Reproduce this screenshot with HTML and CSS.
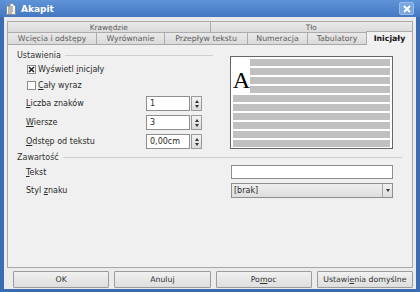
FILE: index.html
```html
<!DOCTYPE html>
<html lang="pl">
<head>
    <meta charset="UTF-8">
    <title>Akapit</title>
    <link rel="stylesheet" href="styles.css">
</head>
<body>
    <div class="window">
        <div class="titlebar">
            <svg class="app-icon" width="11" height="12" viewBox="0 0 11 12">
                <path d="M1.5 0.5h6l3 3v8h-9z" fill="#f4f4f4" stroke="#8a8a8a"/>
                <path d="M3 4h5M3 6h5M3 8h5M3 10h4" stroke="#7a7a7a"/>
                <rect x="1.5" y="0.5" width="4" height="3" fill="#5c8fd0"/>
            </svg>
            <span class="title">Akapit</span>
            <span class="close">
                <svg width="8" height="8" viewBox="0 0 8 8">
                    <path d="M1 1l6 6M7 1l-6 6" stroke="#fff" stroke-width="1.8"/>
                </svg>
            </span>
        </div>

        <div class="client">
            <div class="tabs">
                <div class="tab-row back">
                    <div class="tab wide">Krawędzie</div>
                    <div class="tab wide">Tło</div>
                </div>
                <div class="tab-row front">
                    <div class="tab t1">Wcięcia i odstępy</div>
                    <div class="tab t2">Wyrównanie</div>
                    <div class="tab t3">Przepływ tekstu</div>
                    <div class="tab t4">Numeracja</div>
                    <div class="tab t5">Tabulatory</div>
                    <div class="tab t6 active">Inicjały</div>
                </div>
            </div>

            <div class="panel">
                <div class="top">
                    <div class="settings">
                        <div class="group-title"><span>Ustawienia</span><span class="rule"></span></div>
                        <div class="check-row first">
                            <span class="checkbox checked">
                                <svg width="7" height="7" viewBox="0 0 7 7"><path d="M1 1l5 5M6 1l-5 5" stroke="#222" stroke-width="1.6"/></svg>
                            </span>
                            <span>Wyświetl <u>i</u>nicjały</span>
                        </div>
                        <div class="check-row second">
                            <span class="checkbox"></span>
                            <span><u>C</u>ały wyraz</span>
                        </div>
                        <div class="field-row spin-row">
                            <span class="label"><u>L</u>iczba znaków</span>
                            <span class="spin"><span class="spin-value">1</span><span class="spin-buttons"><span class="up"></span><span class="down"></span></span></span>
                        </div>
                        <div class="field-row spin-row">
                            <span class="label"><u>W</u>iersze</span>
                            <span class="spin"><span class="spin-value">3</span><span class="spin-buttons"><span class="up"></span><span class="down"></span></span></span>
                        </div>
                        <div class="field-row spin-row">
                            <span class="label"><u>O</u>dstęp od tekstu</span>
                            <span class="spin"><span class="spin-value">0,00cm</span><span class="spin-buttons"><span class="up"></span><span class="down"></span></span></span>
                        </div>
                    </div>

                    <div class="preview">
                        <div class="drop-cap">A</div>
                        <div class="bar short"></div>
                        <div class="bar short"></div>
                        <div class="bar short"></div>
                        <div class="bar short"></div>
                        <div class="bar"></div>
                        <div class="bar"></div>
                        <div class="bar"></div>
                        <div class="bar"></div>
                        <div class="bar"></div>
                        <div class="bar"></div>
                    </div>
                </div>

                <div class="group-title content-title"><span>Zawartość</span><span class="rule"></span></div>
                <div class="field-row text-row">
                    <span class="label wide-label"><u>T</u>ekst</span>
                    <span class="text-input"></span>
                </div>
                <div class="field-row select-row">
                    <span class="label wide-label">Styl <u>z</u>naku</span>
                    <span class="select"><span class="select-value">[brak]</span><span class="select-button"></span></span>
                </div>
            </div>

            <div class="buttons">
                <div class="button">OK</div>
                <div class="button">Anuluj</div>
                <div class="button">Po<u>m</u>oc</div>
                <div class="button">Ustawi<u>e</u>nia domyślne</div>
            </div>
        </div>
    </div>
</body>
</html>
```

FILE: styles.css
```css
body {
    margin: 0;
    font-family: "DejaVu Sans", sans-serif;
    font-size: 8px;
    color: #2a2a2a;
}
u {
    text-decoration-thickness: 1px;
    text-underline-offset: 1px;
}
.window {
    width: 420px;
    height: 292px;
    background: #3c6cb2;
    display: flex;
    flex-direction: column;
}
.titlebar {
    height: 17px;
    display: flex;
    align-items: center;
    background: linear-gradient(#5e93d8, #4479c2);
    color: #fff;
}
.app-icon {
    margin-left: 5px;
}
.title {
    margin-left: 5px;
    font-weight: bold;
    font-size: 9px;
}
.close {
    margin-left: auto;
    margin-right: 6px;
    width: 15px;
    height: 13px;
    border-radius: 2px;
    background: #7aa6e0;
    border: 1px solid #9bbdea;
    box-sizing: border-box;
    display: flex;
    align-items: center;
    justify-content: center;
}
.client {
    flex: 1;
    margin: 0 4px 3px 4px;
    background: #ebebeb;
    padding: 4px 3px 1px 3px;
    display: flex;
    flex-direction: column;
}

/* tabs */
.tab-row {
    display: flex;
}
.tab-row.back {
    height: 11px;
}
.tab-row.front {
    height: 12px;
}
.tab {
    box-sizing: border-box;
    border: 1px solid #ababab;
    border-bottom: none;
    margin-left: -1px;
    background: linear-gradient(#e9e9e9, #dadada);
    color: #5c5c5c;
    font-size: 7.8px;
    display: flex;
    align-items: center;
    justify-content: center;
}
.tab:first-child {
    margin-left: 0;
}
.tab.wide {
    flex: 1;
    font-size: 7.4px;
}
.t1 { width: 90px; }
.t2 { width: 69px; }
.t3 { width: 84px; }
.t4 { width: 61px; }
.t5 { width: 60px; }
.t6 { flex: 1; }
.tab.active {
    background: #f1f1f1;
    color: #111;
    font-weight: bold;
    margin-top: -1px;
    height: 14px;
    position: relative;
    z-index: 1;
}

/* panel */
.panel {
    height: 224px;
    box-sizing: border-box;
    border: 1px solid #a8a8a8;
    background: #f0f0f0;
    padding: 3px 9px 0 9px;
}
.top {
    display: flex;
    align-items: flex-start;
}
.settings {
    width: 196px;
    display: flex;
    flex-direction: column;
}
.group-title {
    height: 14px;
    display: flex;
    align-items: center;
    color: #333;
}
.rule {
    flex: 1;
    margin-left: 4px;
    border-top: 1px solid #cfcfcf;
}
.content-title {
    height: 12px;
    margin-right: 1px;
}
.check-row {
    display: flex;
    align-items: center;
    padding-left: 10px;
}
.check-row.first {
    height: 15px;
}
.check-row.second {
    height: 17px;
}
.checkbox {
    width: 9px;
    height: 9px;
    box-sizing: border-box;
    border: 1px solid #8c8c8c;
    background: #fbfbfb;
    margin-right: 2px;
    display: flex;
    align-items: center;
    justify-content: center;
}
.field-row {
    display: flex;
    align-items: center;
}
.spin-row {
    height: 19px;
}
.text-row {
    height: 18px;
}
.select-row {
    height: 19px;
}
.label {
    width: 120px;
    padding-left: 9px;
}
.wide-label {
    width: 205px;
}
.spin {
    display: flex;
    height: 15px;
}
.spin-value {
    width: 44px;
    box-sizing: border-box;
    border: 1px solid #8e8e8e;
    background: #fff;
    padding-left: 3px;
    display: flex;
    align-items: center;
}
.spin-buttons {
    width: 11px;
    margin-left: 1px;
    box-sizing: border-box;
    border: 1px solid #9a9a9a;
    background: linear-gradient(#f2f2f2, #dcdcdc);
    display: flex;
    flex-direction: column;
    align-items: center;
    justify-content: center;
    gap: 2px;
}
.up {
    border-left: 2.5px solid transparent;
    border-right: 2.5px solid transparent;
    border-bottom: 3px solid #333;
}
.down {
    border-left: 2.5px solid transparent;
    border-right: 2.5px solid transparent;
    border-top: 3px solid #333;
}
.text-input {
    width: 162px;
    height: 14px;
    box-sizing: border-box;
    border: 1px solid #8e8e8e;
    background: #fff;
}
.select {
    width: 162px;
    height: 15px;
    box-sizing: border-box;
    border: 1px solid #8e8e8e;
    background: linear-gradient(#eeeeee, #dedede);
    display: flex;
}
.select-value {
    flex: 1;
    padding-left: 2px;
    display: flex;
    align-items: center;
}
.select-button {
    width: 9px;
    border-left: 1px solid #a8a8a8;
    display: flex;
    align-items: center;
    justify-content: center;
}
.select-button::after {
    content: "";
    border-left: 2.5px solid transparent;
    border-right: 2.5px solid transparent;
    border-top: 3px solid #333;
}

/* preview */
.preview {
    margin-left: 17px;
    margin-top: 8px;
    width: 163px;
    height: 93px;
    box-sizing: border-box;
    border: 1px solid #666;
    background: #fff;
    padding: 2px 2px;
    display: grid;
    grid-template-columns: 17px 1fr;
    grid-auto-rows: 7px;
    row-gap: 2px;
}
.drop-cap {
    grid-row: 1 / span 4;
    grid-column: 1;
    font-family: "Liberation Serif", serif;
    font-size: 24px;
    line-height: 1;
    color: #000;
    display: flex;
    align-items: flex-end;
    justify-content: center;
    padding-bottom: 1px;
}
.bar {
    background: #c0c0c0;
    grid-column: 1 / -1;
}
.bar.short {
    grid-column: 2;
}

/* buttons */
.buttons {
    margin: 3px 0 0 6px;
    height: 17px;
    display: grid;
    grid-template-columns: repeat(4, 1fr);
    gap: 5px;
}
.button {
    box-sizing: border-box;
    border: 1px solid #9c9c9c;
    border-radius: 1px;
    background: linear-gradient(#f1f1f1, #dedede);
    color: #333;
    font-size: 7.8px;
    display: flex;
    align-items: center;
    justify-content: center;
}
```
